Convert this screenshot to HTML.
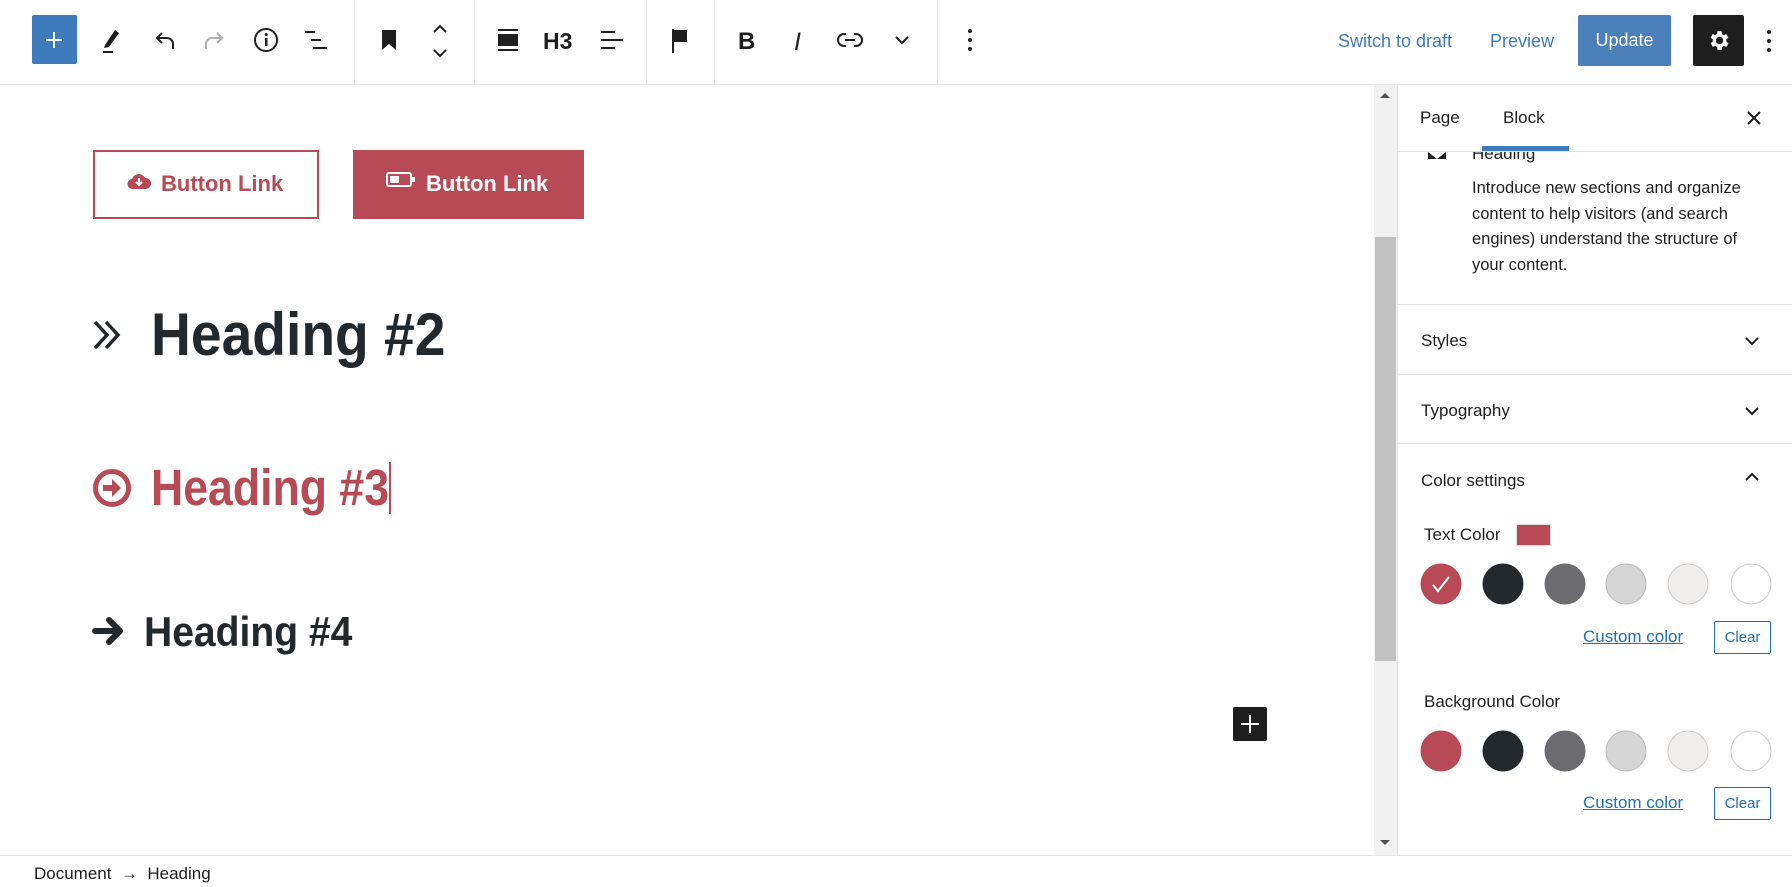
<!DOCTYPE html>
<html><head><meta charset="utf-8"><style>
*{box-sizing:border-box;margin:0;padding:0}
body{width:1792px;height:887px;overflow:hidden;background:#fff;font-family:"Liberation Sans",sans-serif;color:#1e1e1e;position:relative}
.a{position:absolute}
.sep{position:absolute;top:0;width:1px;height:84px;background:#e2e4e7}
.ic{position:absolute;top:25px}
.side{font-size:17px;color:#1e1e1e}
.circ{position:absolute;width:41px;height:41px;border-radius:50%;transform:translate(-50%,-50%)}
.cc{position:absolute;color:#2271b1;text-decoration:underline;font-size:17px}
.clr{position:absolute;border:1px solid #2271b1;color:#2271b1;font-size:15px;border-radius:2px;text-align:center;line-height:31px}
.h{position:absolute;font-weight:bold;white-space:nowrap;transform-origin:left center}
</style></head><body>
<!-- toolbar -->
<div class="a" style="left:0;top:84px;width:1792px;height:1px;background:#e2e4e7"></div>
<div class="a" style="left:32px;top:15px;width:45px;height:49px;background:#3e7bbd;border-radius:2px"></div>
<div class="a" style="left:46px;top:39px;width:16px;height:2px;background:#fff"></div>
<div class="a" style="left:53px;top:32px;width:2px;height:16px;background:#fff"></div>
<svg class="ic" style="left:99px" width="24" height="30" viewBox="0 0 24 30"><path d="M6 20 L16 5 L20 8 L10 22 L5 23 Z" fill="#1e1e1e"/><rect x="4" y="26" width="10" height="2" fill="#1e1e1e"/></svg>
<svg class="ic" style="left:153px" width="24" height="30" viewBox="0 0 24 30"><path d="M9 8 L4 13 L9 18 M4 13 H14 a6 6 0 0 1 6 6 V24" fill="none" stroke="#1e1e1e" stroke-width="2"/></svg>
<svg class="ic" style="left:202px" width="24" height="30" viewBox="0 0 24 30"><path d="M15 8 L20 13 L15 18 M20 13 H10 a6 6 0 0 0 -6 6 V24" fill="none" stroke="#b0b0b0" stroke-width="2"/></svg>
<svg class="ic" style="left:253px" width="26" height="30" viewBox="0 0 26 30"><circle cx="13" cy="15" r="11" fill="none" stroke="#1e1e1e" stroke-width="2"/><rect x="12" y="13" width="2.5" height="8" fill="#1e1e1e"/><circle cx="13.2" cy="9.5" r="1.5" fill="#1e1e1e"/></svg>
<svg class="ic" style="left:303px" width="26" height="30" viewBox="0 0 26 30"><path d="M2 7h10M8 15h10M10 23h14" stroke="#1e1e1e" stroke-width="2"/></svg>
<div class="sep" style="left:354px"></div>
<svg class="ic" style="left:379px" width="20" height="30" viewBox="0 0 20 30"><path d="M3 5h14v20l-7-6-7 6z" fill="#1e1e1e"/></svg>
<svg class="ic" style="left:430px;top:20px" width="20" height="42" viewBox="0 0 20 42"><path d="M4 12l6-6 6 6M4 30l6 6 6-6" fill="none" stroke="#1e1e1e" stroke-width="2"/></svg>
<div class="sep" style="left:474px"></div>
<svg class="ic" style="left:496px" width="24" height="30" viewBox="0 0 24 30"><path d="M2 5h20M2 25h20" stroke="#1e1e1e" stroke-width="2"/><rect x="2" y="9" width="20" height="12" fill="#1e1e1e"/></svg>
<div class="a" style="left:543px;top:28px;font-weight:bold;font-size:23px">H3</div>
<svg class="ic" style="left:599px" width="26" height="30" viewBox="0 0 26 30"><path d="M2 7h14M2 15h22M2 23h14" stroke="#1e1e1e" stroke-width="2"/></svg>
<div class="sep" style="left:646px"></div>
<svg class="ic" style="left:669px" width="22" height="30" viewBox="0 0 22 30"><path d="M4 4v24" stroke="#1e1e1e" stroke-width="2"/><path d="M5 5h13v12H5z" fill="#1e1e1e"/></svg>
<div class="sep" style="left:714px"></div>
<div class="a" style="left:738px;top:28px;font-weight:bold;font-size:24px">B</div>
<div class="a" style="left:794px;top:28px;font-style:italic;font-size:25px">I</div>
<svg class="ic" style="left:836px" width="28" height="30" viewBox="0 0 28 30"><path d="M10 9H8a6 6 0 0 0 0 12h2M18 9h2a6 6 0 0 1 0 12h-2M9 15h10" fill="none" stroke="#1e1e1e" stroke-width="2"/></svg>
<svg class="ic" style="left:891px" width="22" height="30" viewBox="0 0 22 30"><path d="M5 12l6 6 6-6" fill="none" stroke="#1e1e1e" stroke-width="2"/></svg>
<div class="sep" style="left:937px"></div>
<svg class="ic" style="left:966px" width="8" height="30" viewBox="0 0 8 30"><circle cx="4" cy="6" r="2" fill="#1e1e1e"/><circle cx="4" cy="15" r="2" fill="#1e1e1e"/><circle cx="4" cy="24" r="2" fill="#1e1e1e"/></svg>
<div class="a" style="left:1338px;top:31px;font-size:18px;color:#3e7bbd">Switch to draft</div>
<div class="a" style="left:1490px;top:31px;font-size:18px;color:#3e7bbd">Preview</div>
<div class="a" style="left:1578px;top:15px;width:93px;height:51px;background:#4a7fba;border-radius:2px;color:#fff;font-size:18px;text-align:center;line-height:51px">Update</div>
<div class="a" style="left:1693px;top:15px;width:51px;height:51px;background:#1e1e1e;border-radius:2px"></div>
<svg class="a" style="left:1706px;top:28px" width="25" height="25" viewBox="0 0 24 24"><path fill="#fff" d="M19.4 13a7.5 7.5 0 0 0 0-2l2.1-1.6-2-3.5-2.5 1a7 7 0 0 0-1.7-1L15 3h-4l-.4 2.8a7 7 0 0 0-1.7 1l-2.5-1-2 3.5L6.6 11a7.5 7.5 0 0 0 0 2l-2.1 1.6 2 3.5 2.5-1a7 7 0 0 0 1.7 1L11 21h4l.4-2.8a7 7 0 0 0 1.7-1l2.5 1 2-3.5zM13 15.5a3.5 3.5 0 1 1 0-7 3.5 3.5 0 0 1 0 7z"/></svg>
<svg class="a" style="left:1765px;top:26px" width="8" height="30" viewBox="0 0 8 30"><circle cx="4" cy="6" r="2" fill="#1e1e1e"/><circle cx="4" cy="15" r="2" fill="#1e1e1e"/><circle cx="4" cy="24" r="2" fill="#1e1e1e"/></svg>

<!-- content -->
<div class="a" style="left:93px;top:150px;width:226px;height:69px;border:2px solid #b84a55"></div>
<svg class="a" style="left:127px;top:171px" width="24" height="20" viewBox="0 0 24 20"><path d="M6 18a5 5 0 0 1-1-10 7 7 0 0 1 13-1 5.5 5.5 0 0 1 1 11z" fill="#b84a55"/><path d="M12 7v7M9 11l3 3 3-3" stroke="#fff" stroke-width="2" fill="none"/></svg>
<div class="a" style="left:161px;top:171px;font-weight:bold;font-size:22px;color:#b84a55">Button Link</div>
<div class="a" style="left:353px;top:150px;width:231px;height:69px;background:#b84a55"></div>
<svg class="a" style="left:386px;top:172px" width="30" height="16" viewBox="0 0 30 16"><rect x="1" y="1" width="24" height="13" rx="2" fill="none" stroke="#fff" stroke-width="2"/><rect x="4" y="4" width="9" height="7" fill="#fff"/><rect x="26" y="5" width="3" height="5" fill="#fff"/></svg>
<div class="a" style="left:426px;top:171px;font-weight:bold;font-size:22px;color:#fff">Button Link</div>

<svg class="a" style="left:92px;top:319px" width="32" height="32" viewBox="0 0 32 32"><path d="M3 3l12 13L3 29M14 3l12 13-12 13" fill="none" stroke="#23282d" stroke-width="3.5"/></svg>
<div class="h" style="left:151px;top:300px;font-size:60px;line-height:70px;color:#23282d;transform:scaleX(0.92)">Heading #2</div>

<svg class="a" style="left:92px;top:468px" width="40" height="40" viewBox="0 0 40 40"><circle cx="20" cy="20" r="16.5" fill="none" stroke="#b84a55" stroke-width="5"/><path d="M11 17h9v-6l9 9-9 9v-6h-9z" fill="#b84a55"/></svg>
<div class="h" style="left:151px;top:458px;font-size:51px;line-height:60px;color:#b84a55;transform:scaleX(0.875)">Heading #3</div>
<div class="a" style="left:389px;top:462px;width:2px;height:52px;background:#b84a55"></div>

<svg class="a" style="left:92px;top:615px" width="34" height="32" viewBox="0 0 34 32"><path d="M3 16h24M17 5l11 11-11 11" fill="none" stroke="#23282d" stroke-width="6" stroke-linecap="round" stroke-linejoin="round"/></svg>
<div class="h" style="left:144px;top:607px;font-size:42px;line-height:50px;color:#23282d;transform:scaleX(0.93)">Heading #4</div>

<div class="a" style="left:1233px;top:707px;width:34px;height:34px;background:#1e1e1e;border-radius:2px"></div>
<div class="a" style="left:1241px;top:723px;width:18px;height:2px;background:#fff"></div>
<div class="a" style="left:1249px;top:715px;width:2px;height:18px;background:#fff"></div>

<!-- scrollbar -->
<div class="a" style="left:1374px;top:85px;width:23px;height:770px;background:#f1f1f1"></div>
<div class="a" style="left:1375px;top:237px;width:21px;height:424px;background:#c1c1c1"></div>
<div class="a" style="left:1380px;top:93px;width:0;height:0;border-left:5px solid transparent;border-right:5px solid transparent;border-bottom:5px solid #505050"></div>
<div class="a" style="left:1380px;top:840px;width:0;height:0;border-left:5px solid transparent;border-right:5px solid transparent;border-top:5px solid #505050"></div>

<!-- sidebar -->
<div class="a" style="left:1397px;top:85px;width:1px;height:770px;background:#e2e4e7"></div>
<div class="a side" style="left:1420px;top:108px">Page</div>
<div class="a side" style="left:1503px;top:108px">Block</div>
<div class="a" style="left:1398px;top:152px;width:394px;height:12px;overflow:hidden">
  <div style="position:absolute;left:74px;top:-8px;font-size:17px;color:#1e1e1e">Heading</div>
  <div style="position:absolute;left:30px;top:0;width:0;height:0;border-left:9px solid #1e1e1e;border-right:9px solid #1e1e1e;border-top:7px solid transparent"></div>
</div>
<div class="a" style="left:1482px;top:146px;width:87px;height:5px;background:#3e7bbd"></div>
<div class="a" style="left:1398px;top:151px;width:394px;height:1px;background:#e2e4e7"></div>
<svg class="a" style="left:1746px;top:110px" width="16" height="16" viewBox="0 0 16 16"><path d="M2 2l12 12M14 2L2 14" stroke="#1e1e1e" stroke-width="2"/></svg>
<div class="a side" style="left:1472px;top:176px;width:300px;line-height:25.5px;font-size:16.5px">Introduce new sections and organize content to help visitors (and search engines) understand the structure of your content.</div>
<div class="a" style="left:1398px;top:304px;width:394px;height:1px;background:#e2e4e7"></div>
<div class="a side" style="left:1421px;top:331px">Styles</div>
<div class="a" style="left:1398px;top:374px;width:394px;height:1px;background:#e2e4e7"></div>
<div class="a side" style="left:1421px;top:401px">Typography</div>
<div class="a" style="left:1398px;top:443px;width:394px;height:1px;background:#e2e4e7"></div>
<div class="a side" style="left:1421px;top:471px">Color settings</div>
<svg class="a" style="left:1744px;top:336px" width="16" height="10" viewBox="0 0 16 10"><path d="M2 2l6 6 6-6" fill="none" stroke="#1e1e1e" stroke-width="2"/></svg>
<svg class="a" style="left:1744px;top:406px" width="16" height="10" viewBox="0 0 16 10"><path d="M2 2l6 6 6-6" fill="none" stroke="#1e1e1e" stroke-width="2"/></svg>
<svg class="a" style="left:1744px;top:472px" width="16" height="10" viewBox="0 0 16 10"><path d="M2 8l6-6 6 6" fill="none" stroke="#1e1e1e" stroke-width="2"/></svg>
<div class="a side" style="left:1424px;top:525px;font-size:17px">Text Color</div>
<div class="a" style="left:1517px;top:525px;width:33px;height:20px;background:#b84a55;box-shadow:0 0 0 1px #ddd"></div>
<div class="circ" style="left:1441px;top:584px;background:#b84a55"></div>
<svg class="a" style="left:1429px;top:572px" width="24" height="24" viewBox="0 0 24 24"><path d="M4 13l5 6L20 5" fill="none" stroke="#fff" stroke-width="2"/></svg>
<div class="circ" style="left:1503px;top:584px;background:#23282d"></div>
<div class="circ" style="left:1565px;top:584px;background:#6c6c70"></div>
<div class="circ" style="left:1626px;top:584px;background:#d5d5d5;border:1px solid #bbb"></div>
<div class="circ" style="left:1688px;top:584px;background:#f0eeec;border:1px solid #ccc"></div>
<div class="circ" style="left:1751px;top:584px;background:#fff;border:1px solid #ccc"></div>
<div class="cc" style="left:1583px;top:627px">Custom color</div>
<div class="clr" style="left:1714px;top:621px;width:57px;height:33px">Clear</div>
<div class="a side" style="left:1424px;top:692px">Background Color</div>
<div class="circ" style="left:1441px;top:751px;background:#b84a55"></div>
<div class="circ" style="left:1503px;top:751px;background:#23282d"></div>
<div class="circ" style="left:1565px;top:751px;background:#6c6c70"></div>
<div class="circ" style="left:1626px;top:751px;background:#d5d5d5;border:1px solid #bbb"></div>
<div class="circ" style="left:1688px;top:751px;background:#f0eeec;border:1px solid #ccc"></div>
<div class="circ" style="left:1751px;top:751px;background:#fff;border:1px solid #ccc"></div>
<div class="cc" style="left:1583px;top:793px">Custom color</div>
<div class="clr" style="left:1714px;top:787px;width:57px;height:33px">Clear</div>

<!-- footer -->
<div class="a" style="left:0;top:855px;width:1792px;height:1px;background:#e2e4e7"></div>
<div class="a" style="left:34px;top:864px;font-size:17px;color:#1e1e1e">Document&nbsp;&nbsp;→&nbsp;&nbsp;Heading</div>
</body></html>
